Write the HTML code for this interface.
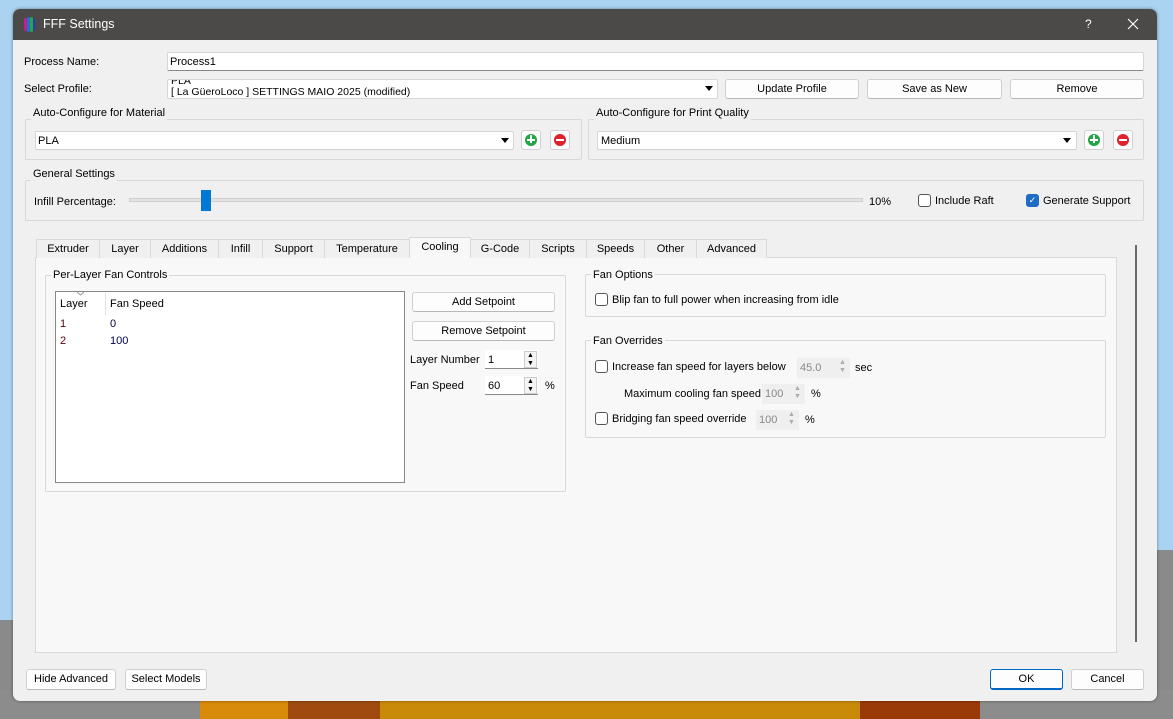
<!DOCTYPE html>
<html><head><meta charset="utf-8"><style>
*{box-sizing:border-box}
body{margin:0;width:1173px;height:719px;overflow:hidden;position:relative;background:#a9d3f0;font-family:"Liberation Sans",sans-serif;font-size:11px;color:#000}
.a{position:absolute}
.t{position:absolute;white-space:nowrap;line-height:14px}
.btn{position:absolute;background:#fdfdfd;border:1px solid #d0d0d0;border-bottom-color:#b8b8b8;border-radius:3px;text-align:center;line-height:18px}
.inp{position:absolute;background:#fff;border:1px solid #d6d6d6;border-bottom:1px solid #888;border-radius:2px}
.grp{position:absolute;border:1px solid #d8d8d8;border-radius:2px}
.gt{position:absolute;background:#f0f0f0;padding:0 2px;line-height:14px;white-space:nowrap}
.cb{position:absolute;width:13px;height:13px;border:1px solid #555;border-radius:3px;background:#fff}
.arr{position:absolute;width:0;height:0;border-left:4px solid transparent;border-right:4px solid transparent;border-top:5px solid #000}
.pm{position:absolute;width:20px;height:20px;border:1px solid #d0d0d0;border-radius:3px;background:#fdfdfd}
.pm i{position:absolute;left:3px;top:3px;width:12px;height:12px;border-radius:50%}
.pm i:before{content:"";position:absolute;background:#fff;left:2px;top:5px;width:8px;height:2px}
.tab{position:absolute;top:239px;height:19px;border:1px solid #d9d9d9;border-bottom:none;background:#f0f0f0;text-align:center;line-height:18px}
.sp{position:absolute;background:#fff;border-bottom:1px solid #888}
.spb{position:absolute;right:1px;top:1px;width:13px;height:17px;border:1px solid #ccc;background:#f4f4f4;font-size:7px;line-height:8px;text-align:center}
.dis{background:#efefef;border:none;color:#888}
</style></head><body>
<div class="a" style="left:0;top:620px;width:14px;height:99px;background:#8a8a8a"></div>
<div class="a" style="left:1157px;top:550px;width:16px;height:169px;background:#8a8a8a"></div>
<div class="a" style="left:0;top:690px;width:1173px;height:29px;background:#8c8c8c"></div>
<div class="a" style="left:200px;top:698px;width:200px;height:21px;background:#d88a0a"></div>
<div class="a" style="left:288px;top:698px;width:95px;height:21px;background:#a04a10"></div>
<div class="a" style="left:380px;top:698px;width:520px;height:21px;background:#c98a0a"></div>
<div class="a" style="left:860px;top:698px;width:120px;height:21px;background:#9a3a08"></div>
<div class="a" style="left:13px;top:9px;width:1144px;height:692px;background:#f0f0f0;border-radius:7px;overflow:hidden;box-shadow:0 0 3px rgba(0,0,0,.4)">
<div class="a" style="left:0;top:0;width:1144px;height:31px;background:#4b4a48"></div>
</div>
<div class="a" style="left:24px;top:18px;width:3px;height:13px;background:#c0208a;border-radius:2px"></div>
<div class="a" style="left:27px;top:17px;width:3px;height:15px;background:#2a6ad8;border-radius:2px"></div>
<div class="a" style="left:30px;top:17px;width:3px;height:15px;background:#26a83a;border-radius:2px"></div>
<div class="a" style="left:33px;top:18px;width:2px;height:13px;background:#2040c0;border-radius:2px"></div>
<div class="t" style="left:43px;top:17px;color:#fff;font-size:12.5px">FFF Settings</div>
<div class="t" style="left:1085px;top:17px;color:#fff;font-size:12px">?</div>
<svg class="a" style="left:1127px;top:18px" width="12" height="12"><path d="M1 1L11 11M11 1L1 11" stroke="#fff" stroke-width="1.2"/></svg>

<div class="t" style="left:24px;top:55px">Process Name:</div>
<div class="inp" style="left:167px;top:52px;width:977px;height:19px"></div>
<div class="t" style="left:170px;top:55px">Process1</div>
<div class="t" style="left:24px;top:82px">Select Profile:</div>
<div class="inp" style="left:167px;top:79px;width:551px;height:20px;border-bottom-color:#d6d6d6;overflow:hidden"><div class="t" style="left:3px;top:-4px;font-size:10.5px;line-height:11px">PLA<br>[ La GüeroLoco ] SETTINGS MAIO 2025 (modified)</div></div>
<div class="arr" style="left:705px;top:86px"></div>
<div class="btn" style="left:725px;top:79px;width:134px;height:20px">Update Profile</div>
<div class="btn" style="left:867px;top:79px;width:135px;height:20px">Save as New</div>
<div class="btn" style="left:1010px;top:79px;width:134px;height:20px">Remove</div>

<div class="grp" style="left:25px;top:119px;width:557px;height:41px"></div>
<div class="gt" style="left:31px;top:106px">Auto-Configure for Material</div>
<div class="inp" style="left:35px;top:131px;width:479px;height:19px;border-bottom-color:#d0d0d0"></div>
<div class="t" style="left:38px;top:134px">PLA</div>
<div class="arr" style="left:501px;top:138px"></div>
<div class="pm" style="left:521px;top:130px"><i style="background:#22a544"></i></div>
<div class="pm" style="left:550px;top:130px"><i style="background:#e0202a"></i></div>

<div class="grp" style="left:588px;top:119px;width:556px;height:41px"></div>
<div class="gt" style="left:594px;top:106px">Auto-Configure for Print Quality</div>
<div class="inp" style="left:597px;top:131px;width:480px;height:19px;border-bottom-color:#d0d0d0"></div>
<div class="t" style="left:601px;top:134px">Medium</div>
<div class="arr" style="left:1063px;top:138px"></div>
<div class="pm" style="left:1084px;top:130px"><i style="background:#22a544"></i></div>
<div class="pm" style="left:1113px;top:130px"><i style="background:#e0202a"></i></div>
<div class="a" style="left:530px;top:135px;width:2px;height:8px;background:#fff"></div>
<div class="a" style="left:1093px;top:135px;width:2px;height:8px;background:#fff"></div>

<div class="grp" style="left:25px;top:180px;width:1119px;height:41px"></div>
<div class="gt" style="left:31px;top:167px">General Settings</div>
<div class="t" style="left:34px;top:195px">Infill Percentage:</div>
<div class="a" style="left:129px;top:198px;width:734px;height:4px;background:#e2e2e2;border:1px solid #d0d0d0"></div>
<div class="a" style="left:201px;top:190px;width:10px;height:21px;background:#0078d4"></div>
<div class="t" style="left:869px;top:195px">10%</div>
<div class="cb" style="left:918px;top:194px"></div>
<div class="t" style="left:935px;top:194px">Include Raft</div>
<div class="cb" style="left:1026px;top:194px;background:#1f6cc4;border-color:#1f6cc4;color:#fff;font-size:9px;line-height:11px;text-align:center">✓</div>
<div class="t" style="left:1043px;top:194px">Generate Support</div>

<div class="a" style="left:35px;top:257px;width:1082px;height:396px;background:#f8f8f8;border:1px solid #dadada"></div>
<div class="a" style="left:1135px;top:245px;width:2px;height:397px;background:#6a6a6a"></div>
<div class="tab" style="left:36px;width:64px">Extruder</div>
<div class="tab" style="left:99px;width:52px">Layer</div>
<div class="tab" style="left:150px;width:69px">Additions</div>
<div class="tab" style="left:218px;width:45px">Infill</div>
<div class="tab" style="left:262px;width:63px">Support</div>
<div class="tab" style="left:324px;width:86px">Temperature</div>
<div class="tab" style="left:409px;top:237px;width:62px;height:21px;background:#f8f8f8;line-height:19px">Cooling</div>
<div class="tab" style="left:470px;width:60px">G-Code</div>
<div class="tab" style="left:529px;width:58px">Scripts</div>
<div class="tab" style="left:586px;width:59px">Speeds</div>
<div class="tab" style="left:644px;width:53px">Other</div>
<div class="tab" style="left:696px;width:71px">Advanced</div>

<div class="grp" style="left:45px;top:275px;width:521px;height:217px"></div>
<div class="gt" style="left:51px;top:268px;background:#f8f8f8">Per-Layer Fan Controls</div>
<div class="a" style="left:55px;top:291px;width:350px;height:192px;background:#fff;border:1px solid #888"></div>
<div class="a" style="left:105px;top:293px;width:1px;height:22px;background:#e0e0e0"></div>
<svg class="a" style="left:77px;top:292px" width="7" height="4"><path d="M0 0L3.5 3L7 0" stroke="#999" fill="none"/></svg>
<div class="t" style="left:60px;top:297px">Layer</div>
<div class="t" style="left:110px;top:297px">Fan Speed</div>
<div class="t" style="left:60px;top:317px;color:#5a0010">1</div>
<div class="t" style="left:110px;top:317px;color:#000050">0</div>
<div class="t" style="left:60px;top:334px;color:#5a0010">2</div>
<div class="t" style="left:110px;top:334px;color:#000050">100</div>
<div class="btn" style="left:412px;top:292px;width:143px;height:20px">Add Setpoint</div>
<div class="btn" style="left:412px;top:321px;width:143px;height:20px">Remove Setpoint</div>
<div class="t" style="left:410px;top:353px">Layer Number</div>
<div class="sp" style="left:485px;top:350px;width:53px;height:19px"><div class="t" style="left:3px;top:3px">1</div><div class="spb">▲<br>▼</div></div>
<div class="t" style="left:410px;top:379px">Fan Speed</div>
<div class="sp" style="left:485px;top:376px;width:53px;height:19px"><div class="t" style="left:3px;top:3px">60</div><div class="spb">▲<br>▼</div></div>
<div class="t" style="left:545px;top:379px">%</div>

<div class="grp" style="left:585px;top:274px;width:521px;height:43px"></div>
<div class="gt" style="left:591px;top:268px;background:#f8f8f8">Fan Options</div>
<div class="cb" style="left:595px;top:293px"></div>
<div class="t" style="left:612px;top:293px">Blip fan to full power when increasing from idle</div>

<div class="grp" style="left:585px;top:340px;width:521px;height:98px"></div>
<div class="gt" style="left:591px;top:334px;background:#f8f8f8">Fan Overrides</div>
<div class="cb" style="left:595px;top:360px"></div>
<div class="t" style="left:612px;top:360px">Increase fan speed for layers below</div>
<div class="sp dis" style="left:797px;top:358px;width:53px;height:20px"><div class="t" style="left:3px;top:3px">45.0</div><div class="spb" style="border:none;background:none;color:#aaa">▲<br>▼</div></div>
<div class="t" style="left:855px;top:361px">sec</div>
<div class="t" style="left:624px;top:387px">Maximum cooling fan speed</div>
<div class="sp dis" style="left:762px;top:384px;width:43px;height:20px"><div class="t" style="left:3px;top:3px">100</div><div class="spb" style="border:none;background:none;color:#aaa">▲<br>▼</div></div>
<div class="t" style="left:811px;top:387px">%</div>
<div class="cb" style="left:595px;top:412px"></div>
<div class="t" style="left:612px;top:412px">Bridging fan speed override</div>
<div class="sp dis" style="left:756px;top:410px;width:43px;height:20px"><div class="t" style="left:3px;top:3px">100</div><div class="spb" style="border:none;background:none;color:#aaa">▲<br>▼</div></div>
<div class="t" style="left:805px;top:413px">%</div>

<div class="btn" style="left:26px;top:669px;width:90px;height:21px">Hide Advanced</div>
<div class="btn" style="left:125px;top:669px;width:82px;height:21px">Select Models</div>
<div class="btn" style="left:990px;top:669px;width:73px;height:21px;border:1px solid #0067c0;border-bottom:2px solid #0067c0">OK</div>
<div class="btn" style="left:1071px;top:669px;width:73px;height:21px">Cancel</div>
</body></html>
